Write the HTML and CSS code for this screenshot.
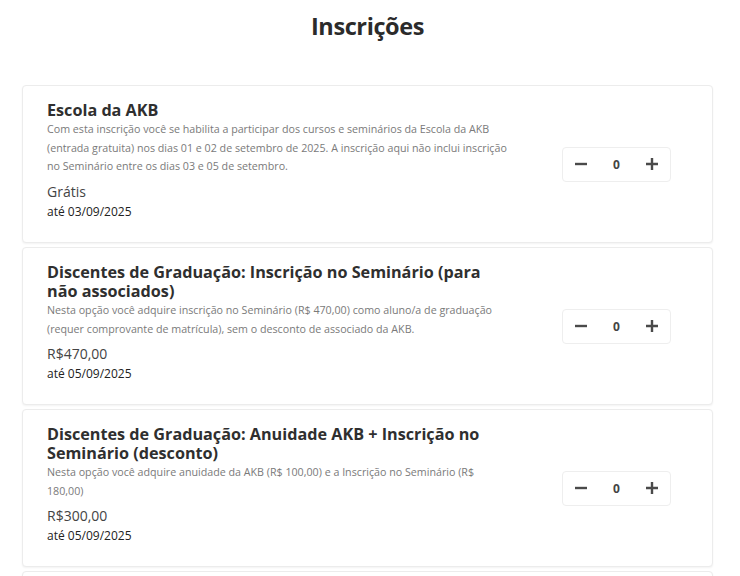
FILE: index.html
```html
<!DOCTYPE html>
<html lang="pt-BR">
<head>
<meta charset="utf-8">
<title>Inscrições</title>
<link rel="stylesheet" href="styles.css">
</head>
<body>
<main class="page">
  <h1 class="page-title">Inscrições</h1>
  <section class="ticket-list">
    <article class="ticket">
      <div class="ticket-info">
        <h2 class="ticket-name">Escola da AKB</h2>
        <p class="ticket-desc">Com esta inscrição você se habilita a participar dos cursos e seminários da Escola da AKB (entrada gratuita) nos dias 01 e 02 de setembro de 2025. A inscrição aqui não inclui inscrição no Seminário entre os dias 03 e 05 de setembro.</p>
        <div class="ticket-price">Grátis</div>
        <div class="ticket-until">até 03/09/2025</div>
      </div>
      <div class="qty">
        <button class="qty-btn" type="button" aria-label="Diminuir"><svg width="12" height="12" viewBox="0 0 12 12"><path d="M0 6h12" stroke="currentColor" stroke-width="2.4"/></svg></button>
        <span class="qty-value">0</span>
        <button class="qty-btn" type="button" aria-label="Aumentar"><svg width="12" height="12" viewBox="0 0 12 12"><path d="M0 6h12M6 0v12" stroke="currentColor" stroke-width="2.4"/></svg></button>
      </div>
    </article>
    <article class="ticket">
      <div class="ticket-info">
        <h2 class="ticket-name">Discentes de Graduação: Inscrição no Seminário (para não associados)</h2>
        <p class="ticket-desc">Nesta opção você adquire inscrição no Seminário (R$ 470,00) como aluno/a de graduação (requer comprovante de matrícula), sem o desconto de associado da AKB.</p>
        <div class="ticket-price">R$470,00</div>
        <div class="ticket-until">até 05/09/2025</div>
      </div>
      <div class="qty">
        <button class="qty-btn" type="button" aria-label="Diminuir"><svg width="12" height="12" viewBox="0 0 12 12"><path d="M0 6h12" stroke="currentColor" stroke-width="2.4"/></svg></button>
        <span class="qty-value">0</span>
        <button class="qty-btn" type="button" aria-label="Aumentar"><svg width="12" height="12" viewBox="0 0 12 12"><path d="M0 6h12M6 0v12" stroke="currentColor" stroke-width="2.4"/></svg></button>
      </div>
    </article>
    <article class="ticket">
      <div class="ticket-info">
        <h2 class="ticket-name">Discentes de Graduação: Anuidade AKB + Inscrição no Seminário (desconto)</h2>
        <p class="ticket-desc">Nesta opção você adquire anuidade da AKB (R$ 100,00) e a Inscrição no Seminário (R$ 180,00)</p>
        <div class="ticket-price">R$300,00</div>
        <div class="ticket-until">até 05/09/2025</div>
      </div>
      <div class="qty">
        <button class="qty-btn" type="button" aria-label="Diminuir"><svg width="12" height="12" viewBox="0 0 12 12"><path d="M0 6h12" stroke="currentColor" stroke-width="2.4"/></svg></button>
        <span class="qty-value">0</span>
        <button class="qty-btn" type="button" aria-label="Aumentar"><svg width="12" height="12" viewBox="0 0 12 12"><path d="M0 6h12M6 0v12" stroke="currentColor" stroke-width="2.4"/></svg></button>
      </div>
    </article>
    <article class="ticket ticket-next"></article>
  </section>
</main>
</body>
</html>
```
FILE: styles.css
```css
* {
  box-sizing: border-box;
}

html, body {
  margin: 0;
  background: #fff;
}

body {
  font-family: "Open Sans", "Noto Sans", sans-serif;
  color: #333;
}

.page {
  padding: 8px 27px 0 22px;
}

.page-title {
  margin: 0;
  text-align: center;
  font-size: 23.5px;
  line-height: 36px;
  font-weight: 700;
  color: #2b2b2b;
  letter-spacing: -0.4px;
}

.ticket-list {
  margin-top: 41px;
  display: flex;
  flex-direction: column;
  gap: 4px;
}

.ticket {
  display: flex;
  align-items: center;
  height: 158px;
  padding: 15px 41px 15px 24px;
  border: 1px solid #ececec;
  border-radius: 4px;
  box-shadow: 0 1px 2px rgba(0, 0, 0, 0.05);
  background: #fff;
  flex-shrink: 0;
}

.ticket-info {
  width: 464px;
  align-self: flex-start;
}

.ticket-name {
  margin: 0;
  font-size: 16.2px;
  line-height: 19px;
  font-weight: 700;
  color: #2f2f2f;
}

.ticket-desc {
  margin: 0;
  font-size: 10.7px;
  line-height: 18.5px;
  color: #7a7a7a;
}

.ticket-price {
  margin-top: 5px;
  font-size: 14px;
  line-height: 21px;
  color: #444;
}

.ticket-until {
  margin-top: 1px;
  font-size: 12px;
  line-height: 18px;
  color: #222;
}

.qty {
  margin-left: auto;
  width: 109px;
  height: 35px;
  display: flex;
  align-items: center;
  justify-content: space-between;
  padding: 0 12px;
  border: 1px solid #eeeeee;
  border-radius: 4px;
}

.qty-btn {
  display: flex;
  align-items: center;
  justify-content: center;
  width: 12px;
  height: 12px;
  padding: 0;
  border: 0;
  background: none;
  color: #4a4a4a;
  cursor: pointer;
}

.qty-value {
  font-size: 12px;
  font-weight: 700;
  color: #444;
}
```
